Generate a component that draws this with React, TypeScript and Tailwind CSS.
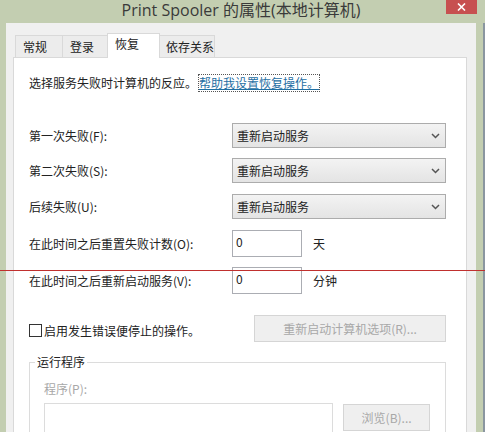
const font = { fontFamily: '"Noto Sans CJK SC", "Noto Sans", sans-serif' }

const Chevron = () => (
  <svg width="9" height="6" viewBox="0 0 9 6" className="text-[#555]">
    <path d="M1 1 L4.5 4.5 L8 1" fill="none" stroke="currentColor" strokeWidth="1.5" />
  </svg>
)

const Select = ({ value }: { value: string }) => (
  <div className="w-[214px] h-[25px] flex items-center justify-between pl-[4px] pr-[5px] border border-[#acacac] bg-gradient-to-b from-[#f3f3f3] to-[#e4e4e4] text-[12px] leading-[16px] text-[#222]">
    <span>{value}</span>
    <Chevron />
  </div>
)

const Field = ({ value }: { value: string }) => (
  <div className="w-[70px] h-[27px] border border-[#abadb3] bg-white pl-[3px] pt-[3px] text-[12px] leading-[16px] text-[#222]">
    {value}
  </div>
)

const Row = ({ label, mt, children }: { label: string; mt: string; children: React.ReactNode }) => (
  <div className={`flex items-center ${mt}`}>
    <div className="w-[203px] text-[12px] leading-[16px] text-[#222]">{label}</div>
    {children}
  </div>
)

const Tab = ({ label, active, w }: { label: string; active?: boolean; w: string }) =>
  active ? (
    <div className={`${w} h-[25px] -mx-[2px] -mb-px relative z-10 bg-white border border-b-0 border-[#d9d9d9] pl-[7px] pt-[2px] text-[12px] leading-[16px] text-[#222]`}>
      {label}
    </div>
  ) : (
    <div className={`${w} h-[22px] -mr-px bg-[#ececec] border border-b-0 border-[#d9d9d9] pl-[7px] pt-[3px] text-[12px] leading-[16px] text-[#222]`}>
      {label}
    </div>
  )

export default function App() {
  return (
    <div className="w-[485px] h-[432px] overflow-hidden relative bg-[#c3ceb1] flex flex-col" style={font}>
      <div className="h-[23px] shrink-0 flex items-start justify-center pl-[6px] pr-[9px] relative">
        <span
          className="text-[16px] leading-[21px] text-[#3a3a3a]"
          style={{ fontFamily: '"Open Sans", "Noto Sans CJK SC", sans-serif' }}
        >
          Print Spooler 的属性(本地计算机)
        </span>
        <div className="absolute right-[8px] top-0 w-[31px] h-[14px] bg-[#c75050] flex items-center justify-center">
          <svg width="9" height="8" viewBox="0 0 9 8">
            <path d="M1 0.5 L8 7.5 M8 0.5 L1 7.5" stroke="white" strokeWidth="1.6" />
          </svg>
        </div>
      </div>

      <div className="flex flex-1 min-h-0">
        <div className="w-[6px] shrink-0" />
        <div className="w-[470px] bg-[#f0f0f0] pt-[10px]">
          <div className="flex items-end pl-[9px] h-[24px]">
            <Tab label="常规" w="w-[48px]" />
            <Tab label="登录" w="w-[48px]" />
            <Tab label="恢复" w="w-[53px]" active />
            <Tab label="依存关系" w="w-[57px]" />
          </div>
          <div className="ml-[7px] w-[454px] h-[400px] bg-white border border-[#d9d9d9] pl-[15px] pr-[20px]">
            <div className="mt-[17px] text-[12px] leading-[16px] text-[#222] flex">
              <span>选择服务失败时计算机的反应。</span>
              <span className="ml-[2px] text-[#1f6fa3] underline outline outline-1 outline-dotted outline-[#555]">帮助我设置恢复操作。</span>
            </div>

            <Row label="第一次失败(F):" mt="mt-[32px]">
              <Select value="重新启动服务" />
            </Row>
            <Row label="第二次失败(S):" mt="mt-[10px]">
              <Select value="重新启动服务" />
            </Row>
            <Row label="后续失败(U):" mt="mt-[11px]">
              <Select value="重新启动服务" />
            </Row>
            <Row label="在此时间之后重置失败计数(O):" mt="mt-[11px]">
              <Field value="0" />
              <span className="ml-[11px] text-[12px] leading-[16px] text-[#222]">天</span>
            </Row>
            <Row label="在此时间之后重新启动服务(V):" mt="mt-[10px]">
              <Field value="0" />
              <span className="ml-[11px] text-[12px] leading-[16px] text-[#222]">分钟</span>
            </Row>

            <div className="mt-[21px] flex items-center justify-between">
              <div className="flex items-center mt-[4px]">
                <div className="w-[13px] h-[13px] border border-[#333] bg-white" />
                <span className="ml-[2px] text-[12px] leading-[16px] text-[#222]">启用发生错误便停止的操作。</span>
              </div>
              <div className="w-[192px] h-[27px] border border-[#d5d5d5] bg-[#efefef] flex items-center justify-center text-[12px] leading-[16px] text-[#a8a8a8]">
                重新启动计算机选项(R)...
              </div>
            </div>

            <div className="mt-[20px] border border-[#dcdcdc] pl-[14px] pr-[15px] h-[120px]">
              <div className="-mt-[9px] -ml-[9px] w-fit bg-white px-[2px] text-[12px] leading-[16px] text-[#222]">
                运行程序
              </div>
              <div className="mt-[11px] text-[12px] leading-[16px] text-[#a8a8a8]">程序(P):</div>
              <div className="mt-[6px] flex items-start">
                <div className="w-[290px] h-[30px] border border-[#dcdcdc] bg-white" />
                <div className="ml-[10px] mt-px w-[87px] h-[27px] border border-[#d5d5d5] bg-[#efefef] flex items-center justify-center text-[12px] leading-[16px] text-[#a8a8a8]">
                  浏览(B)...
                </div>
              </div>
            </div>
          </div>
        </div>
        <div className="w-[7px] shrink-0" />
        <div className="w-[2px] shrink-0 bg-[#8a96a0]" />
      </div>

      <div className="absolute left-0 right-0 top-[270px] h-px bg-[#c0302e]" />
    </div>
  )
}
